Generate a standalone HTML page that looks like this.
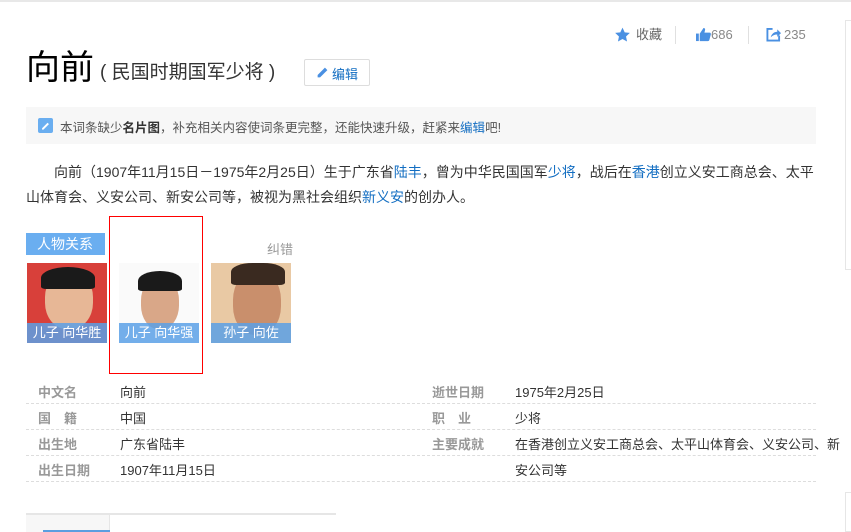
<!DOCTYPE html>
<html><head><meta charset="utf-8"><style>
*{margin:0;padding:0;box-sizing:border-box}
body{width:851px;height:532px;overflow:hidden;background:#fff;font-family:"Liberation Sans","Noto Sans CJK SC",sans-serif;color:#333;position:relative}
.a{position:absolute;white-space:nowrap}
a{color:#136ec2;text-decoration:none}
.photo{position:absolute;top:263px;width:80px;height:80px;overflow:hidden}
.cap{position:absolute;left:0;bottom:0;width:80px;height:20px;background:rgba(90,160,230,.85);color:#fff;font-size:13px;text-align:center;line-height:20px}
.lab{position:absolute;font-size:13px;color:#999;font-weight:bold}
.val{position:absolute;font-size:13px;color:#333}
.dl{position:absolute;left:26px;width:790px;border-top:1px dashed #ddd;height:0}
</style></head><body>
<div class="a" style="left:0;top:0;width:851px;height:2px;background:#e8e8e8"></div>
<div class="a" style="left:845px;top:20px;width:6px;height:250px;border:1px solid #e6e6e6;border-right:none"></div>
<div class="a" style="left:845px;top:492px;width:6px;height:40px;border:1px solid #e6e6e6;border-right:none"></div>

<svg class="a" style="left:614px;top:27px" width="17" height="16" viewBox="0 0 24 24"><path d="M12 1l3.3 7 7.7.9-5.7 5.3 1.5 7.6L12 18l-6.8 3.8 1.5-7.6L1 8.9 8.7 8z" fill="#4a90e2"/></svg>
<div class="a" style="left:636px;top:26px;font-size:13px;color:#666;line-height:17px">收藏</div>
<div class="a" style="left:675px;top:26px;width:1px;height:18px;background:#e0e0e0"></div>
<svg class="a" style="left:696px;top:27px" width="15" height="15" viewBox="0 0 16 16"><rect x="0" y="7" width="3" height="8" fill="#4a90e2"/><path d="M4 7l4-6c1.5 0 2 1 1.6 2.5L9 6h5.5c1 0 1.6 1 1.3 2l-1.6 6c-.3.7-.8 1-1.5 1H4z" fill="#4a90e2"/></svg>
<div class="a" style="left:711px;top:26px;font-size:13px;color:#888;line-height:17px">686</div>
<div class="a" style="left:748px;top:26px;width:1px;height:18px;background:#e0e0e0"></div>
<svg class="a" style="left:766px;top:27px" width="15" height="15" viewBox="0 0 16 16"><path d="M7 2H1.5v12.5h12.5V9" fill="none" stroke="#4a90e2" stroke-width="2"/><path d="M5 11c1-4 4-6 7-6V2.5l4 4-4 4V8c-3 0-5 1-7 3z" fill="#4a90e2"/></svg>
<div class="a" style="left:784px;top:26px;font-size:13px;color:#888;line-height:17px">235</div>

<div class="a" style="left:26px;top:48px;font-size:34px;color:#000;line-height:40px">向前</div>
<div class="a" style="left:100px;top:61px;font-size:19px;color:#333;line-height:24px">( 民国时期国军少将 )</div>
<div class="a" style="left:304px;top:59px;width:66px;height:27px;border:1px solid #ddd;border-radius:2px;background:#fff"></div>
<svg class="a" style="left:316px;top:66px" width="13" height="13" viewBox="0 0 16 16"><path d="M2 11L11 2l3 3-9 9H2z" fill="#4a90e2"/></svg>
<div class="a" style="left:332px;top:64px;font-size:13px;color:#136ec2">编辑</div>

<div class="a" style="left:26px;top:107px;width:790px;height:37px;background:#f7f7f7"></div>
<div class="a" style="left:38px;top:118px;width:15px;height:15px;background:#6aaef0;border-radius:2px"></div>
<svg class="a" style="left:40px;top:120px" width="11" height="11" viewBox="0 0 16 16"><path d="M3 12L11 4l2 2-8 8H3z" fill="#fff"/></svg>
<div class="a" style="left:60px;top:117px;font-size:12.5px;color:#555">本词条缺少<b style="color:#333">名片图</b>，补充相关内容使词条更完整，还能快速升级，赶紧来<a>编辑</a>吧!</div>

<div class="a" style="left:26px;top:160px;width:800px;font-size:14px;line-height:25px;color:#333;white-space:normal;text-indent:28px">向前（1907年11月15日－1975年2月25日）生于广东省<a>陆丰</a>，曾为中华民国国军<a>少将</a>，战后在<a>香港</a>创立义安工商总会、太平山体育会、义安公司、新安公司等，被视为黑社会组织<a>新义安</a>的创办人。</div>

<div class="a" style="left:26px;top:233px;width:76px;height:22px;background:#6aaef0;color:#fff;font-size:14px;line-height:22px;padding-left:11px">人物关系</div>
<div class="a" style="left:100px;top:233px;width:0;height:0;border-top:11px solid transparent;border-bottom:11px solid transparent;border-right:5px solid #6aaef0"></div>
<div class="a" style="left:102px;top:233px;width:3px;height:22px;background:#6aaef0"></div>
<div class="a" style="left:267px;top:239px;font-size:13px;color:#999">纠错</div>

<div class="photo" style="left:27px;background:#d8403a">
<div class="a" style="left:18px;top:8px;width:48px;height:58px;border-radius:45%;background:#e7b796"></div>
<div class="a" style="left:14px;top:4px;width:54px;height:22px;border-radius:50% 50% 10% 10%;background:#1a1a1a"></div>
<div class="cap">儿子 向华胜</div></div>
<div class="photo" style="left:119px;background:#fafafa">
<div class="a" style="left:22px;top:14px;width:38px;height:52px;border-radius:45%;background:#d9a788"></div>
<div class="a" style="left:19px;top:8px;width:44px;height:20px;border-radius:50% 50% 10% 10%;background:#1a1a1a"></div>
<div class="cap">儿子 向华强</div></div>
<div class="photo" style="left:211px;background:#e9c9a4">
<div class="a" style="left:22px;top:8px;width:48px;height:64px;border-radius:45%;background:#c98f6c"></div>
<div class="a" style="left:20px;top:0;width:54px;height:22px;border-radius:40% 40% 10% 10%;background:#3a2a20"></div>
<div class="cap">孙子 向佐</div></div>
<div class="a" style="left:109px;top:216px;width:94px;height:158px;border:1px solid #f00"></div>

<div class="lab" style="left:38px;top:382px">中文名</div><div class="val" style="left:120px;top:382px">向前</div>
<div class="lab" style="left:432px;top:382px">逝世日期</div><div class="val" style="left:515px;top:382px">1975年2月25日</div>
<div class="dl" style="top:403px"></div>
<div class="lab" style="left:38px;top:408px">国　籍</div><div class="val" style="left:120px;top:408px">中国</div>
<div class="lab" style="left:432px;top:408px">职　业</div><div class="val" style="left:515px;top:408px">少将</div>
<div class="dl" style="top:429px"></div>
<div class="lab" style="left:38px;top:434px">出生地</div><div class="val" style="left:120px;top:434px">广东省陆丰</div>
<div class="lab" style="left:432px;top:434px">主要成就</div><div class="val" style="left:515px;top:434px">在香港创立义安工商总会、太平山体育会、义安公司、新</div>
<div class="dl" style="top:455px"></div>
<div class="lab" style="left:38px;top:460px">出生日期</div><div class="val" style="left:120px;top:460px">1907年11月15日</div>
<div class="val" style="left:515px;top:460px">安公司等</div>
<div class="dl" style="top:481px"></div>

<div class="a" style="left:26px;top:513px;width:310px;height:2px;background:#e6e6e6"></div>
<div class="a" style="left:26px;top:515px;width:84px;height:17px;background:#f7f7f7;border-right:1px solid #e6e6e6"></div>
<div class="a" style="left:43px;top:530px;width:67px;height:2px;background:#5a9ee0"></div>
</body></html>
